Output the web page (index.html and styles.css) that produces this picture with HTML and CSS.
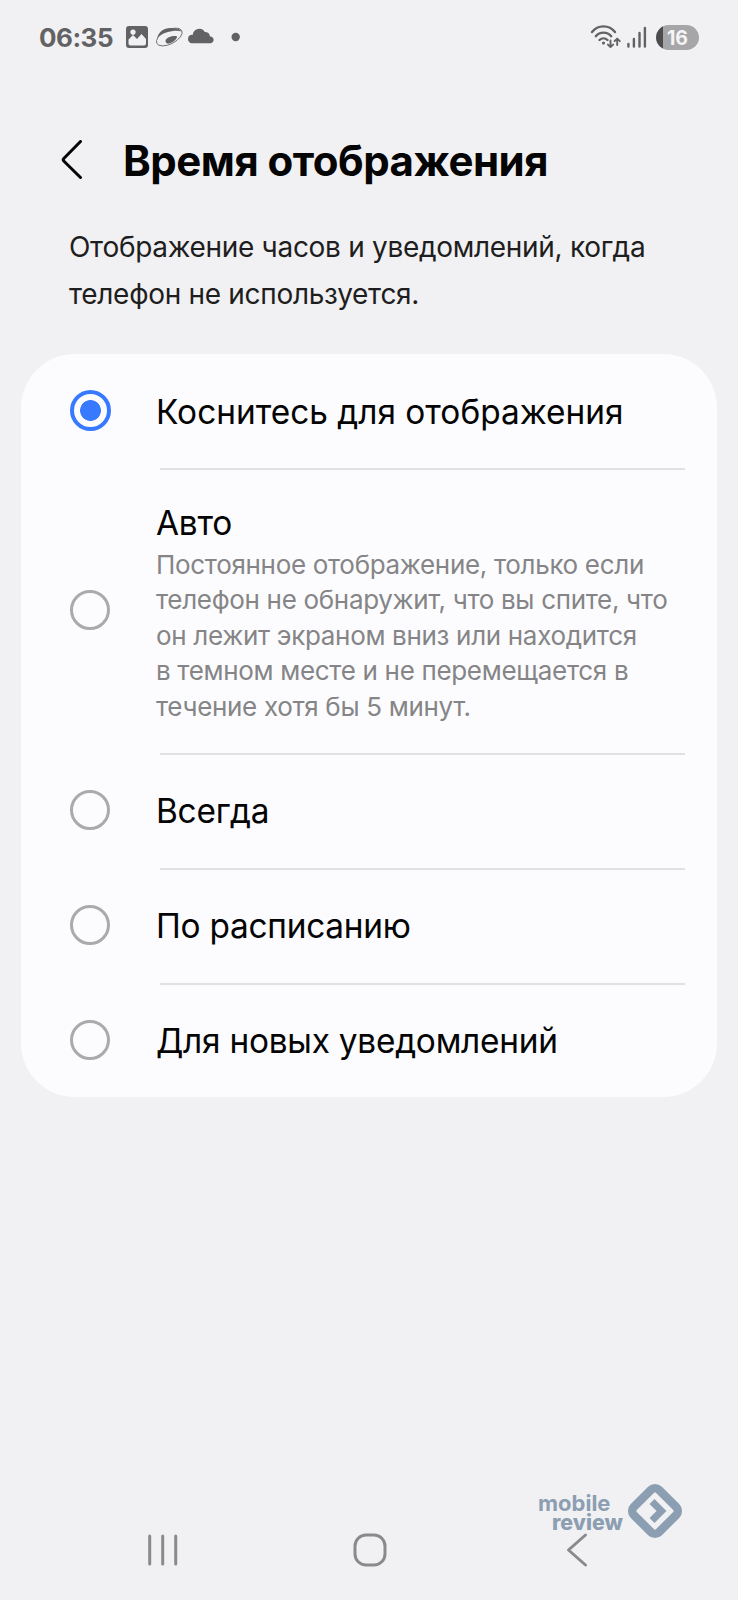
FILE: index.html
```html
<!DOCTYPE html>
<html lang="ru">
<head>
  <meta charset="UTF-8">
  <meta name="viewport" content="width=device-width, initial-scale=1.0">
  <title>Время отображения</title>
  <link rel="stylesheet" href="styles.css">
</head>
<body>
  <div class="status-bar">
    <span class="clock">06:35</span>
    <!-- notifications: gallery, browser, cloud, more -->
    <svg class="notifications" width="120" height="30" viewBox="0 0 120 30">
      <path fill-rule="evenodd" d="M4 4h16a3 3 0 0 1 3 3v16a3 3 0 0 1-3 3H4a3 3 0 0 1-3-3V7a3 3 0 0 1 3-3zM3.500 21.500v-4l4.500-4.500 4 4 4.500-5 4.500 5v4.500q0 2-2 2H5.500q-2 0-2-2zM8 7.500a2.700 2.700 0 1 0 .01 0z"/>
      <path d="M32 16C34 9 40 5.500 46 6c6 .2 10 1.500 10.500 3.500C51 7.500 38 10 32 16z"/>
      <path d="M41 20.500c-1.500-2.500 1-5 5-6 4-.7 6.500-.5 6 1-1 2.500-4 5-8 6-1.500.4-2.500-.2-3-1z"/>
      <ellipse cx="44.300" cy="15" rx="14" ry="7" transform="rotate(-27 44.300 15)" fill="none" stroke="#626264" stroke-width=".8"/>
      <path d="M67 21.200a4.300 4.300 0 0 1-.5-8.500h1.300a6.500 6.500 0 0 1 12-2.800 5 5 0 0 1 5.200 4.500h1a3.500 3.500 0 0 1 0 6.800z"/>
      <circle cx="110.700" cy="15" r="4.200"/>
    </svg>
    <!-- wi-fi and signal level -->
    <svg class="network" width="58" height="26" viewBox="0 0 58 26">
      <g class="stroke">
        <path d="M2 8a14.500 14.500 0 0 1 23 0"/>
        <path d="M5.800 12.200a10 10 0 0 1 15.400 0"/>
        <path d="M9.500 16a5.800 5.800 0 0 1 8 0"/>
        <path d="M38.400 20v2.500M43.900 15v7.500M49.500 9v13.500M54.900 4v18.500"/>
        <path class="arrows" d="M20.500 16.500v6.500M17.900 20.600l2.600 2.600 2.600-2.600M27.200 21V15M24.600 17.200l2.600-2.600 2.600 2.600"/>
      </g>
      <circle cx="13.500" cy="19" r="1.600"/>
    </svg>
    <span class="battery">16</span>
  </div>

  <div class="header">
    <svg width="24" height="42" viewBox="0 0 24 42">
      <path d="M19.500 1.500 3 18.200Q1.500 19.700 3 21.200L19.500 37.500"/>
    </svg>
    <h1>Время отображения</h1>
  </div>
  <p class="description">Отображение часов и уведомлений, когда<br>телефон не используется.</p>

  <div class="card">
    <div class="option first">
      <span class="radio checked"></span>
      <div class="label">Коснитесь для отображения</div>
    </div>
    <div class="divider"></div>
    <div class="option tall">
      <span class="radio"></span>
      <div class="text">
        <div class="label">Авто</div>
        <p class="hint">Постоянное отображение, только если<br>телефон не обнаружит, что вы спите, что<br>он лежит экраном вниз или находится<br>в темном месте и не перемещается в<br>течение хотя бы 5 минут.</p>
      </div>
    </div>
    <div class="divider"></div>
    <div class="option">
      <span class="radio"></span>
      <div class="label">Всегда</div>
    </div>
    <div class="divider"></div>
    <div class="option">
      <span class="radio"></span>
      <div class="label">По расписанию</div>
    </div>
    <div class="divider"></div>
    <div class="option">
      <span class="radio"></span>
      <div class="label">Для новых уведомлений</div>
    </div>
  </div>

  <div class="nav-bar">
    <svg width="40" height="40" viewBox="0 0 40 40"><path d="M7.700 6v28M20.700 6v28M33.700 6v28"/></svg>
    <svg width="40" height="40" viewBox="0 0 40 40"><rect x="5" y="5" width="30" height="30" rx="11"/></svg>
    <svg width="40" height="40" viewBox="0 0 40 40"><path d="M28.500 5 11.500 20l17 15"/></svg>
  </div>

  <div class="watermark">
    <div class="brand">
      <div class="brand-top">mobile</div>
      <div class="brand-bottom">review</div>
    </div>
    <svg width="56" height="56" viewBox="0 0 56 56">
      <rect x="10.250" y="10.250" width="35.500" height="35.500" rx="5.500" transform="rotate(45 28 28)" fill="none" stroke="#8c9eb2" stroke-width="8.500"/>
      <path d="M25 18.500 34.500 28 25 37.500" fill="none" stroke="#8c9eb2" stroke-width="7"/>
    </svg>
  </div>
</body>
</html>
```
FILE: styles.css
```css
* {
  box-sizing: border-box;
}
body {
  margin: 0;
  height: 1600px;
  display: flex;
  flex-direction: column;
  position: relative;
  background: #f1f1f3;
  color: #050505;
  font-family: Inter, Roboto, sans-serif;
}
.status-bar {
  display: flex;
  align-items: center;
  height: 74px;
  padding: 0 39px;
  color: #626264;
}
.clock {
  width: 86px;
  font-size: 26px;
  font-weight: 700;
  letter-spacing: -0.5px;
}
.notifications {
  fill: #626264;
}
.network {
  margin-left: auto;
  margin-right: 8px;
  fill: #626264;
}
.stroke {
  fill: none;
  stroke: #626264;
  stroke-width: 2.4;
  stroke-linecap: round;
  stroke-linejoin: round;
}
.arrows {
  stroke-width: 1.9;
}
.battery {
  width: 43px;
  height: 25px;
  border-radius: 13px;
  background: linear-gradient(to right, #4c4c4e 7px, #a6a6a8 7px);
  color: #f4f4f6;
  font-size: 19.5px;
  font-weight: 700;
  line-height: 26px;
  text-align: center;
}
.header {
  display: flex;
  align-items: center;
  height: 100px;
  margin-top: 37px;
  padding-left: 61px;
}
.header svg {
  fill: none;
  stroke: #050505;
  stroke-width: 3;
  stroke-linecap: round;
}
h1 {
  margin: 0 0 0 38px;
  font-size: 42px;
  font-weight: 700;
  line-height: 52px;
  letter-spacing: -0.5px;
}
.description {
  margin: 13px 0 0 69px;
  color: #1e1e20;
  font-size: 28px;
  line-height: 46.7px;
  letter-spacing: -0.3px;
}
.card {
  margin: 36.5px 21px 0;
  height: 743px;
  border-radius: 54px;
  background: #fcfcfe;
}
.option {
  display: flex;
  align-items: center;
  height: 113px;
  padding: 0 0 2px 48px;
}
.option.first {
  height: 114px;
  padding-bottom: 0;
}
.option.tall {
  height: 283px;
}
.radio {
  flex: none;
  width: 40px;
  height: 40px;
  margin: 0 46px 0 1px;
  border: 3px solid #aaaaac;
  border-radius: 50%;
}
.radio.checked {
  width: 41px;
  height: 41px;
  margin-right: 45px;
  border: 4px solid #387aff;
  background: radial-gradient(circle, #387aff 10px, transparent 10.8px);
}
.label {
  padding-top: 2px;
  font-size: 33.4px;
  line-height: 42px;
  letter-spacing: -0.25px;
}
.first .label {
  letter-spacing: 0;
}
.text {
  padding-top: 3px;
}
.hint {
  margin: 3px 0 0;
  color: #858587;
  font-size: 26px;
  line-height: 35.5px;
  letter-spacing: -0.32px;
  white-space: nowrap;
}
.divider {
  height: 2px;
  margin: 0 32px 0 139px;
  background: #e1e1e3;
}
.nav-bar {
  display: flex;
  justify-content: space-between;
  margin-top: auto;
  padding: 0 141px 30px 142px;
}
.nav-bar svg {
  fill: none;
  stroke: #8a8a8c;
  stroke-width: 3;
  stroke-linecap: round;
  stroke-linejoin: round;
}
.watermark {
  display: flex;
  align-items: center;
  position: absolute;
  left: 538px;
  top: 1483px;
  color: #8c9eb2;
}
.brand {
  width: 89px;
  padding-top: 4px;
  font-size: 22px;
  font-weight: 700;
  line-height: 19.5px;
}
.brand-bottom {
  margin-left: 14px;
  font-size: 21.3px;
  font-weight: 800;
}
```
